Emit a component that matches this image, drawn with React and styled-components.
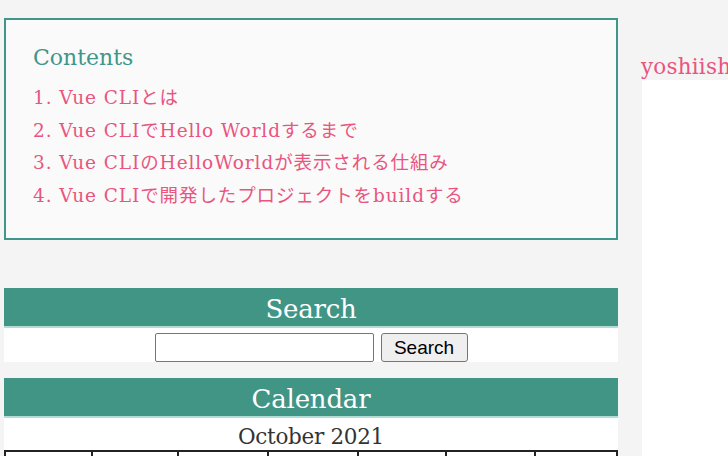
import React from "react";
import styled, { createGlobalStyle } from "styled-components";

const GlobalStyle = createGlobalStyle`
	html, body {
		margin: 0;
		padding: 0;
		background: #f4f4f4;
		overflow: hidden;
	}
	body {
		font-family: "DejaVu Serif", "Noto Sans CJK JP", serif;
	}
`;

const contents = [
	"1. Vue CLIとは",
	"2. Vue CLIでHello Worldするまで",
	"3. Vue CLIのHelloWorldが表示される仕組み",
	"4. Vue CLIで開発したプロジェクトをbuildする",
];

const colWidths = [87, 87, 90, 90, 89, 89, 82];

function App() {
	return (
		<>
			<GlobalStyle />
			<Page>
				<Main>
					<Toc>
						<TocTitle>Contents</TocTitle>
						<TocList>
							{contents.map((item) => (
								<TocItem key={item}>{item}</TocItem>
							))}
						</TocList>
					</Toc>

					<Widget $top={48}>
						<WidgetHead>Search</WidgetHead>
						<SearchForm onSubmit={(e) => e.preventDefault()}>
							<SearchInput type="text" />
							<SearchButton type="submit">Search</SearchButton>
						</SearchForm>
					</Widget>

					<Widget $top={16}>
						<WidgetHead>Calendar</WidgetHead>
						<CalendarBody>
							<Caption>October 2021</Caption>
							<Table>
								<thead>
									<tr>
										{colWidths.map((w, i) => (
											<Th key={i} $w={w}></Th>
										))}
									</tr>
								</thead>
							</Table>
						</CalendarBody>
					</Widget>
				</Main>

				<Side>
					<SideTitle>yoshiishi</SideTitle>
					<SideBox />
				</Side>
			</Page>
		</>
	);
}

const Page = styled.div`
	display: flex;
	align-items: flex-start;
	gap: 24px;
	padding: 18px 0 0 4px;
	width: 900px;
`;

const Main = styled.div`
	width: 614px;
	flex-shrink: 0;
`;

const Toc = styled.div`
	border: 2px solid #40968a;
	background: #fafafa;
	padding: 20px 27px 26px;
`;

const TocTitle = styled.div`
	color: #40968a;
	font-size: 22px;
	line-height: 36px;
`;

const TocList = styled.ol`
	list-style: none;
	margin: 6px 0 0;
	padding: 0;
`;

const TocItem = styled.li`
	color: #e9557f;
	font-size: 18.5px;
	line-height: 32.6px;
	letter-spacing: 0.9px;
`;

const Widget = styled.div`
	margin-top: ${(p) => p.$top}px;
`;

const WidgetHead = styled.div`
	background: #419585;
	border-bottom: 2px solid #b2ddd7;
	color: #fff;
	text-align: center;
	font-size: 26px;
	height: 40px;
	line-height: 42px;
	letter-spacing: -0.2px;
	box-sizing: border-box;
`;

const SearchForm = styled.form`
	display: flex;
	justify-content: center;
	gap: 7px;
	background: #fff;
	padding-top: 5px;
	height: 34px;
	box-sizing: border-box;
	margin: 0;
`;

const SearchInput = styled.input`
	width: 219px;
	height: 29px;
	box-sizing: border-box;
	border: 1.5px solid #767676;
	border-radius: 2px;
	padding: 0 4px;
	font-size: 18px;
`;

const SearchButton = styled.button`
	width: 87px;
	height: 29px;
	box-sizing: border-box;
	border: 1.5px solid #767676;
	border-radius: 3px;
	background: #efefef;
	font-family: "Liberation Sans", Arial, sans-serif;
	font-size: 19px;
	color: #000;
	padding: 0;
`;

const CalendarBody = styled.div`
	background: #fff;
	padding-top: 2px;
`;

const Caption = styled.div`
	text-align: center;
	color: #333;
	font-size: 21.5px;
	padding-top: 3px;
	line-height: 27px;
	letter-spacing: -0.3px;
`;

const Table = styled.table`
	width: 100%;
	border-collapse: collapse;
	border: 2px solid #222;
`;

const Th = styled.th`
	width: ${(p) => p.$w}px;
	height: 40px;
	border: 2px solid #222;
`;

const Side = styled.div`
	width: 260px;
	flex-shrink: 0;
`;

const SideTitle = styled.div`
	color: #e9557f;
	font-size: 21.5px;
	line-height: 26px;
	margin: 36px 0 0 -1px;
	letter-spacing: 0.2px;
`;

const SideBox = styled.div`
	background: #fff;
	height: 400px;
`;

export default App;
